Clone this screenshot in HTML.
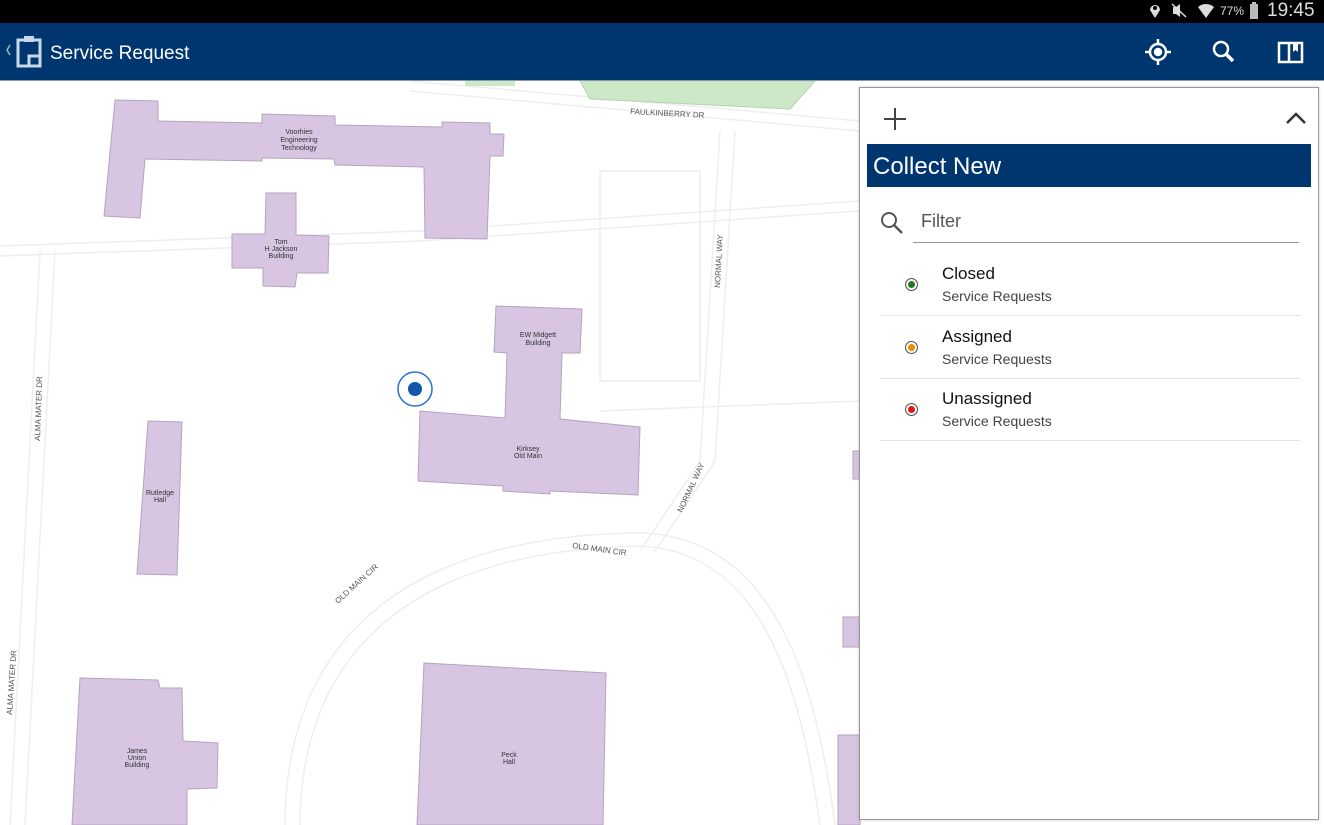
<!DOCTYPE html>
<html><head><meta charset="utf-8"><style>
*{margin:0;padding:0;box-sizing:border-box}
body{width:1324px;height:825px;overflow:hidden;position:relative;background:#fff;font-family:"Liberation Sans",sans-serif}
#sb{position:absolute;left:0;top:0;width:1324px;height:23px;background:#000;color:#ddd}
#ab{position:absolute;left:0;top:23px;width:1324px;height:58px;background:#003670;border-bottom:1px solid #8a96a8}
#map{position:absolute;left:0;top:81px}
#panel{position:absolute;left:859px;top:87px;width:460px;height:733px;background:#fff;border:1px solid #999;box-shadow:0 0 3px rgba(0,0,0,.2)}
.it{position:absolute;left:20px;width:420px;height:62px;border-bottom:1px solid #e4e4e4}
.it .d{position:absolute;left:25px;top:24px;width:13px;height:13px;border-radius:50%;border:1px solid #555}
.it .t{position:absolute;left:62px;top:10px;font-size:17px;color:#111}
.it .s{position:absolute;left:62px;top:34px;font-size:14px;color:#444}
</style></head><body>
<div id="sb">
<svg width="1324" height="23" style="position:absolute;left:0;top:0">
<path d="M1155 18 L1150 10 A5 5 0 1 1 1160 10 Z" fill="#ddd"/><circle cx="1155" cy="8" r="2" fill="#000"/>
<path d="M1173 7 h3 l4 -3 v13 l-4 -3 h-3z" fill="#ddd"/><line x1="1172" y1="4" x2="1186" y2="17" stroke="#ddd" stroke-width="1.5"/>
<path d="M1198 7 A12 12 0 0 1 1214 7 L1206 18 Z" fill="#ddd"/>
<rect x="1250" y="4" width="8" height="15" fill="#bbb"/><rect x="1252" y="2" width="4" height="2" fill="#bbb"/>
</svg>
<span style="position:absolute;left:1220px;top:4px;font-size:12px">77%</span>
<span style="position:absolute;left:1267px;top:0px;font-size:19px">19:45</span>
</div>
<div id="ab">
<svg width="1324" height="58" style="position:absolute;left:0;top:0">
<path d="M10 22 l-3 5 l3 5" stroke="#9bb" fill="none" stroke-width="1.5"/>
<rect x="18" y="17" width="22" height="26" fill="none" stroke="#c8d8e8" stroke-width="3"/>
<rect x="24" y="13" width="10" height="6" fill="#c8d8e8"/>
<path d="M29 43 v-10 h11" stroke="#c8d8e8" stroke-width="3" fill="none"/>
<g stroke="#fff" stroke-width="2.5" fill="none">
<circle cx="1158" cy="29" r="8"/><circle cx="1158" cy="29" r="3" fill="#fff"/>
<path d="M1158 16v5M1158 37v5M1145 29h5M1166 29h5"/>
<circle cx="1221" cy="26" r="7"/><path d="M1226 31l7 7" stroke-width="3.5"/>
<path d="M1279 20h10v19h-10zM1289 20h13v19h-13z" stroke-width="2.5"/>
</g>
<path d="M1293 20h5v9l-2.5-2l-2.5 2z" fill="#fff"/>
</svg>
<span style="position:absolute;left:50px;top:20px;font-size:19px;color:#fff">Service Request</span>
</div>
<svg id="map" width="1324" height="744" style="font-family:'Liberation Sans';font-size:7px">
<g stroke="#eeeeee" stroke-width="1.5" fill="none">
<path d="M0 165 L420 150 L860 120"/><path d="M0 175 L420 160 L860 130"/>
<path d="M410 0 L860 40"/><path d="M410 10 L860 50"/>
<path d="M40 170 L10 744"/><path d="M55 170 L25 744"/>
<path d="M720 50 L700 380 L640 470"/><path d="M735 50 L715 380 L655 470"/>
<path d="M300 744 C300 600 380 470 640 465 C760 470 800 600 820 744"/>
<path d="M285 744 C285 590 370 455 640 452 C770 455 815 590 835 744"/>
<path d="M600 330 L860 320"/><path d="M600 90 L700 90 L700 300 L600 300 Z"/>
</g>
<path d="M580 0 L815 0 L790 28 L590 18 Z" fill="#cde8c8" stroke="#b5d3b0"/>
<path d="M465 0 L515 0 L515 5 L465 5Z" fill="#cde8c8"/>
<g fill="#d8c5e2" stroke="#b4a3be" stroke-width="1">
<path d="M115 19 L158 20 L158 40 L262 42 L262 33 L335 35 L335 44 L442 46 L442 41 L490 42 L490 53 L504 53 L503 75 L490 75 L487 158 L425 157 L424 86 L335 84 L334 78 L262 77 L262 80 L145 78 L140 137 L104 135 Z"/>
<path d="M266 112 L296 112 L296 154 L329 155 L328 192 L297 192 L295 206 L263 205 L263 187 L232 187 L232 153 L265 153 Z"/>
<path d="M496 225 L582 228 L580 272 L562 272 L560 338 L640 346 L638 414 L550 410 L550 413 L503 410 L503 405 L418 400 L420 330 L505 337 L507 272 L494 271 Z"/>
<path d="M148 340 L182 341 L177 494 L137 493 Z"/>
<path d="M80 597 L158 599 L160 607 L182 607 L183 660 L218 662 L217 707 L187 708 L187 744 L72 744 Z"/>
<path d="M424 582 L606 592 L603 744 L417 744 Z"/>
<path d="M853 370 L860 370 L860 398 L853 398Z M843 536 L860 536 L860 566 L843 566Z M838 654 L860 654 L860 744 L838 744Z"/>
</g>
<g fill="#333" text-anchor="middle">
<text x="299" y="53">Voorhies</text><text x="299" y="61">Engineering</text><text x="299" y="69">Technology</text>
<text x="281" y="163">Tom</text><text x="281" y="170">H Jackson</text><text x="281" y="177">Building</text>
<text x="538" y="256">EW Midgett</text><text x="538" y="264">Building</text>
<text x="528" y="370">Kirksey</text><text x="528" y="377">Old Main</text>
<text x="160" y="414">Rutledge</text><text x="160" y="421">Hall</text>
<text x="137" y="672">James</text><text x="137" y="679">Union</text><text x="137" y="686">Building</text>
<text x="509" y="676">Peck</text><text x="509" y="683">Hall</text>
</g>
<g fill="#555" font-size="8">
<text x="630" y="33" transform="rotate(3 630 33)">FAULKINBERRY DR</text>
<text x="572" y="467" transform="rotate(8 572 467)">OLD MAIN CIR</text>
<text x="338" y="523" transform="rotate(-42 338 523)">OLD MAIN CIR</text>
<text x="720" y="207" transform="rotate(-87 720 207)">NORMAL WAY</text>
<text x="682" y="432" transform="rotate(-65 682 432)">NORMAL WAY</text>
<text x="40" y="360" transform="rotate(-88 40 360)">ALMA MATER DR</text>
<text x="12" y="634" transform="rotate(-86 12 634)">ALMA MATER DR</text>
</g>
<circle cx="415" cy="308" r="17" fill="#fff" stroke="#2a6fcf" stroke-width="1.5"/>
<circle cx="415" cy="308" r="8" fill="#1456a8" stroke="#fff" stroke-width="2"/>
</svg>
<div id="panel">
<svg width="460" height="60" style="position:absolute;left:0;top:0">
<path d="M35 20v22M24 31h22" stroke="#444" stroke-width="2"/>
<path d="M427 35l9-9l9 9" stroke="#333" stroke-width="2.5" fill="none"/>
</svg>
<div style="position:absolute;left:7px;top:56px;width:444px;height:43px;background:#003670;color:#fff;font-size:24px;padding:9px 0 0 6px">Collect New</div>
<svg width="40" height="40" style="position:absolute;left:15px;top:117px"><circle cx="14" cy="15" r="7" stroke="#555" stroke-width="2" fill="none"/><path d="M19 20l8 8" stroke="#555" stroke-width="2.5"/></svg>
<div style="position:absolute;left:61px;top:123px;font-size:18px;color:#555">Filter</div>
<div style="position:absolute;left:53px;top:154px;width:386px;height:1px;background:#999"></div>
<div class="it" style="top:166px"><div class="d" style="background:#1f7d1f;box-shadow:inset 0 0 0 2px #fff"></div><div class="t">Closed</div><div class="s">Service Requests</div></div>
<div class="it" style="top:229px"><div class="d" style="background:#f08a00;box-shadow:inset 0 0 0 2px #fff"></div><div class="t">Assigned</div><div class="s">Service Requests</div></div>
<div class="it" style="top:291px"><div class="d" style="background:#e8141a;box-shadow:inset 0 0 0 2px #fff"></div><div class="t">Unassigned</div><div class="s">Service Requests</div></div>
</div>
</body></html>
